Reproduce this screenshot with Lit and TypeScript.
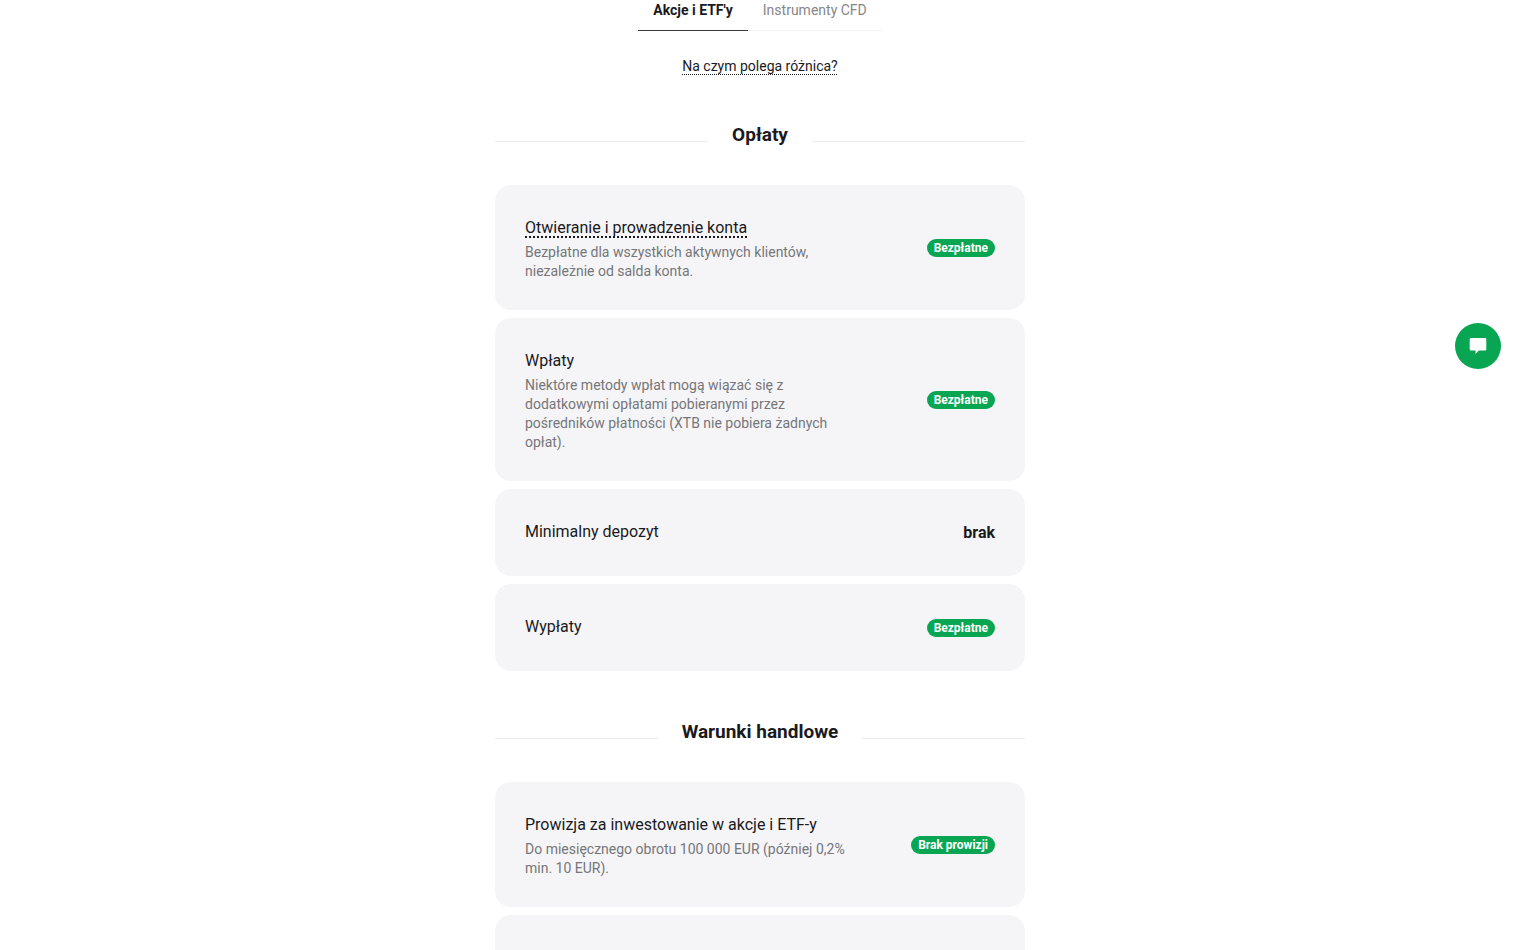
import { LitElement, html, css, nothing } from "lit";
import { customElement, property, state } from "lit/decorators.js";
import { classMap } from "lit/directives/class-map.js";

interface Fee {
  title?: string;
  linked?: boolean;
  note?: string;
  badge?: string;
  value?: string;
}

interface Section {
  heading: string;
  fees: Fee[];
}

const sections: Section[] = [
  {
    heading: "Opłaty",
    fees: [
      {
        title: "Otwieranie i prowadzenie konta",
        linked: true,
        note: "Bezpłatne dla wszystkich aktywnych klientów, niezależnie od salda konta.",
        badge: "Bezpłatne",
      },
      {
        title: "Wpłaty",
        note: "Niektóre metody wpłat mogą wiązać się z dodatkowymi opłatami pobieranymi przez pośredników płatności (XTB nie pobiera żadnych opłat).",
        badge: "Bezpłatne",
      },
      { title: "Minimalny depozyt", value: "brak" },
      { title: "Wypłaty", badge: "Bezpłatne" },
    ],
  },
  {
    heading: "Warunki handlowe",
    fees: [
      {
        title: "Prowizja za inwestowanie w akcje i ETF-y",
        note: "Do miesięcznego obrotu 100\u00a0000 EUR (później 0,2% min. 10 EUR).",
        badge: "Brak prowizji",
      },
      {},
    ],
  },
];

@customElement("fee-card")
export class FeeCard extends LitElement {
  @property({ attribute: false }) fee: Fee = {};

  static styles = css`
    :host {
      display: flex;
      align-items: center;
      justify-content: space-between;
      gap: 24px;
      padding: 30px 30px 29px;
      border-radius: 16px;
      background: #f5f5f7;
    }
    .info {
      max-width: 320px;
      min-height: 28px;
    }
    .title {
      margin: 0;
      font-size: 16px;
      line-height: 25px;
      font-weight: 400;
      color: #1a1a1e;
    }
    .link {
      color: inherit;
      text-decoration: underline dotted 2px;
      text-underline-offset: 3px;
      text-decoration-skip-ink: none;
    }
    .note {
      margin: 3px 0 0;
      font-size: 14px;
      line-height: 19px;
      color: #76767a;
    }
    .badge {
      flex: none;
      padding: 0 7px;
      border-radius: 9px;
      background: #08a652;
      color: #fff;
      font-size: 12px;
      line-height: 18px;
      font-weight: 700;
    }
    .value {
      font-size: 16px;
      line-height: 18px;
      font-weight: 700;
      color: #1a1a1e;
    }
  `;

  render() {
    const { title, linked, note, badge, value } = this.fee;
    return html`
      <div class="info">
        ${title
          ? html`<h3 class="title">${linked ? html`<a class="link" href="#konto">${title}</a>` : title}</h3>`
          : nothing}
        ${note ? html`<p class="note">${note}</p>` : nothing}
      </div>
      ${badge ? html`<span class="badge">${badge}</span>` : nothing}
      ${value ? html`<span class="value">${value}</span>` : nothing}
    `;
  }
}

@customElement("app-root")
export class AppRoot extends LitElement {
  @state() private active = 0;

  static styles = css`
    :host {
      display: block;
      height: 100vh;
      overflow: hidden;
      background: #fff;
      color: #1a1a1e;
      font-family: Roboto, "Noto Sans", sans-serif;
    }
    .page {
      display: flex;
      flex-direction: column;
      align-items: center;
    }
    .tabs {
      display: flex;
    }
    .tab {
      border: 0;
      border-bottom: 1px solid #f3f3f4;
      background: none;
      padding: 0 15px 10px;
      font: 400 14px/20px Roboto, "Noto Sans", sans-serif;
      color: #86868a;
      cursor: pointer;
    }
    .tab.active {
      border-bottom-color: #3a3a3e;
      font-weight: 700;
      color: #1a1a1e;
    }
    .difference {
      margin-top: 27px;
      font-size: 14px;
      line-height: 16px;
      color: inherit;
      text-decoration: underline dotted 1px;
      text-underline-offset: 3px;
      text-decoration-skip-ink: none;
    }
    .section {
      box-sizing: border-box;
      width: 100%;
      max-width: 530px;
      padding-top: 49px;
    }
    .heading {
      display: flex;
      align-items: flex-start;
      gap: 24px;
      margin: 0 0 38px;
      font-size: 19px;
      line-height: 24px;
      font-weight: 700;
    }
    .heading::before,
    .heading::after {
      content: "";
      flex: 1;
      height: 1px;
      margin-top: 18px;
      background: #ececee;
    }
    .list {
      display: flex;
      flex-direction: column;
      gap: 8px;
    }
    .chat {
      position: fixed;
      top: 34%;
      right: 19px;
      display: grid;
      place-items: center;
      width: 46px;
      height: 46px;
      padding: 0;
      border: 0;
      border-radius: 50%;
      background: #08a652;
      cursor: pointer;
    }
  `;

  render() {
    return html`
      <main class="page">
        <div class="tabs" role="tablist">
          ${["Akcje i ETF'y", "Instrumenty CFD"].map(
            (label, i) => html`<button
              role="tab"
              aria-selected=${this.active === i ? "true" : "false"}
              class=${classMap({ tab: true, active: this.active === i })}
              @click=${() => (this.active = i)}
            >${label}</button>`,
          )}
        </div>
        <a class="difference" href="#roznica">Na czym polega różnica?</a>
        ${sections.map(
          (section) => html`<section class="section">
            <h2 class="heading">${section.heading}</h2>
            <div class="list">${section.fees.map((fee) => html`<fee-card .fee=${fee}></fee-card>`)}</div>
          </section>`,
        )}
      </main>
      <button class="chat" aria-label="Czat">
        <svg width="18" height="18" viewBox="0 0 18 18" fill="#fff" aria-hidden="true">
          <path d="M2 1h14a1.3 1.3 0 0 1 1.300 1.300v10a1.300 1.300 0 0 1-1.300 1.300H9.800L6.500 17v-3.400H2A1.300 1.300 0 0 1 .7 12.300v-10A1.300 1.300 0 0 1 2 1z" />
        </svg>
      </button>
    `;
  }
}
